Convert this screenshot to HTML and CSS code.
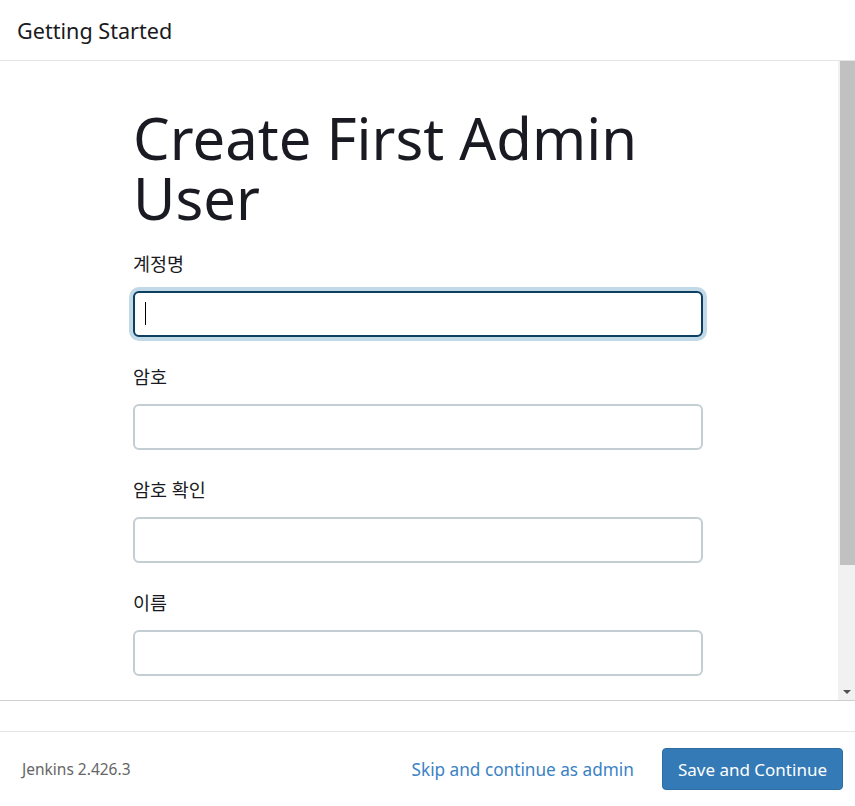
FILE: index.html
```html
<!DOCTYPE html>
<html lang="ko">
<head>
<meta charset="utf-8">
<title>Getting Started</title>
<link rel="stylesheet" href="styles.css">
</head>
<body>
<div class="wizard">
  <header class="header">Getting Started</header>
  <div class="body-row">
    <div class="pane">
      <form class="form">
        <h1 class="title">Create First Admin User</h1>
        <div class="field">
          <label class="label">계정명</label>
          <div class="input-wrap">
            <input class="input focused" type="text">
            <span class="caret"></span>
          </div>
        </div>
        <div class="field">
          <label class="label">암호</label>
          <div class="input-wrap"><input class="input" type="password"></div>
        </div>
        <div class="field">
          <label class="label">암호 확인</label>
          <div class="input-wrap"><input class="input" type="password"></div>
        </div>
        <div class="field">
          <label class="label">이름</label>
          <div class="input-wrap"><input class="input" type="text"></div>
        </div>
      </form>
    </div>
    <div class="scrollbar">
      <div class="thumb"></div>
      <div class="track"></div>
      <div class="arrow"><span class="tri"></span></div>
    </div>
  </div>
  <div class="spacer"></div>
  <footer class="footer">
    <span class="version">Jenkins 2.426.3</span>
    <div class="actions">
      <a class="skip" href="#">Skip and continue as admin</a>
      <button class="save" type="button">Save and Continue</button>
    </div>
  </footer>
</div>
</body>
</html>
```

FILE: styles.css
```css
html, body {
  margin: 0;
  padding: 0;
  background: #fff;
}
body {
  font-family: "Noto Sans", "Noto Sans CJK KR", sans-serif;
  color: #1a1a22;
}
.wizard {
  height: 806px;
  display: flex;
  flex-direction: column;
  overflow: hidden;
}
.header {
  height: 60px;
  flex: 0 0 60px;
  border-bottom: 1px solid #e5e5e5;
  display: flex;
  align-items: center;
  padding-left: 17px;
  font-size: 21.6px;
  color: #1a1a22;
}
.body-row {
  flex: 0 0 639px;
  height: 639px;
  display: flex;
  border-bottom: 1px solid #cfcfcf;
}
.pane {
  flex: 1;
  overflow: hidden;
}
.form {
  width: 570px;
  margin-left: 133px;
}
.title {
  margin: 47px 0 24px;
  font-size: 58px;
  line-height: 60px;
  font-weight: 400;
  color: #1a1a22;
}
.field {
  margin-bottom: 28px;
}
.label {
  display: block;
  font-size: 18.5px;
  line-height: 24px;
  margin-bottom: 15px;
  color: #1a1a22;
}
.input-wrap {
  position: relative;
}
.input {
  display: block;
  width: 100%;
  height: 46px;
  box-sizing: border-box;
  border: 2px solid #c3cdd2;
  border-radius: 6px;
  outline: none;
  background: #fff;
  font-size: 16px;
  padding: 0 12px;
}
.input.focused {
  border-color: #0d3f61;
  box-shadow: 0 0 0 4px #c2d9e7;
}
.caret {
  position: absolute;
  left: 12px;
  top: 11px;
  width: 1px;
  height: 23px;
  background: #000;
}
.scrollbar {
  width: 17px;
  flex: 0 0 17px;
  background: #f1f1f1;
  display: flex;
  flex-direction: column;
}
.thumb {
  height: 504px;
  margin-left: 2px;
  background: #c1c1c1;
}
.track {
  flex: 1;
}
.arrow {
  height: 17px;
  display: flex;
  align-items: center;
  justify-content: center;
}
.tri {
  width: 0;
  height: 0;
  border-left: 4px solid transparent;
  border-right: 4px solid transparent;
  border-top: 4px solid #505050;
}
.spacer {
  flex: 0 0 30px;
  border-bottom: 1px solid #e5e5e5;
}
.footer {
  flex: 1;
  display: flex;
  align-items: center;
  justify-content: space-between;
  padding: 0 12px 0 22px;
}
.version {
  font-size: 15.5px;
  color: #666;
}
.actions {
  display: flex;
  align-items: center;
  gap: 28px;
}
.skip {
  font-size: 17.2px;
  color: #3a82c4;
  text-decoration: none;
}
.save {
  height: 42px;
  padding: 0 15px;
  border: 1px solid #2e6da4;
  border-radius: 4px;
  background: #337ab7;
  color: #fff;
  font-family: inherit;
  font-size: 17px;
}
```
